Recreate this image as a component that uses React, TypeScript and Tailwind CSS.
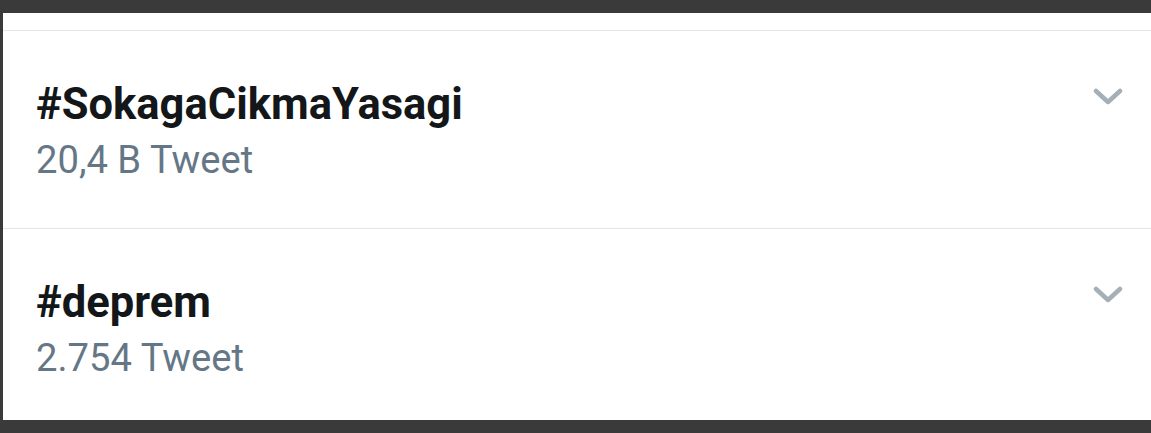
import React from "react";

function Chevron() {
  return (
    <svg width="30" height="18" viewBox="0 0 30 18" className="block">
      <path d="M3 3 L15 14 L27 3" fill="none" stroke="#a4afb8" strokeWidth="4.5" strokeLinecap="round" strokeLinejoin="round" />
    </svg>
  );
}

function Trend({ tag, count, last }: { tag: string; count: string; last?: boolean }) {
  return (
    <div className={`flex ${last ? "" : "border-b border-[#e1e8ed]"} h-[198px]`}>
      <div className="flex-1 pl-[33px] pt-[50px] flex flex-col">
        <div className="text-[43.5px] leading-[48px] font-bold text-[#14171a]">{tag}</div>
        <div className="text-[38.2px] leading-[44px] text-[#657786] mt-[9px]">{count}</div>
      </div>
      <div className="pt-[57px] pr-[28px]">
        <Chevron />
      </div>
    </div>
  );
}

export default function App() {
  return (
    <div className="w-[1151px] h-[433px] bg-[#3a3a3a] pt-[13px] pl-[3px] overflow-hidden" style={{ fontFamily: "Roboto, 'Liberation Sans', sans-serif" }}>
      <div className="bg-white h-[407px] w-[1148px]">
        <div className="h-[18px] border-b border-[#e1e8ed]" />
        <Trend tag="#SokagaCikmaYasagi" count="20,4 B Tweet" />
        <Trend tag="#deprem" count="2.754 Tweet" last />
      </div>
    </div>
  );
}
